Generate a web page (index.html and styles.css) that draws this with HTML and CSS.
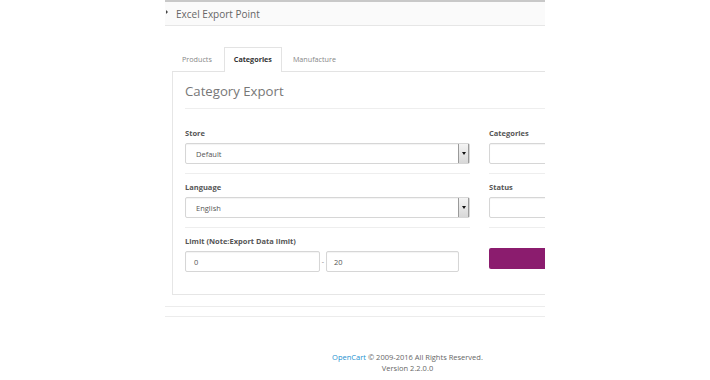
FILE: index.html
```html
<!DOCTYPE html>
<html>
<head>
<meta charset="utf-8">
<link rel="stylesheet" href="styles.css">
</head>
<body>
<div class="page">
  <div class="clip">
    <div class="topline"></div>
    <div class="header">
      <span class="caret"></span>
      <span class="title">Excel Export Point</span>
    </div>
    <div class="tabs">
      <div class="tab">Products</div>
      <div class="tab active">Categories</div>
      <div class="tab">Manufacture</div>
    </div>
    <div class="panel">
      <h1 class="heading">Category Export</h1>
      <div class="grid">
        <div class="group">
          <div class="label">Store</div>
          <div class="select"><span>Default</span><span class="arrow"><i></i></span></div>
        </div>
        <div class="group">
          <div class="label">Categories</div>
          <div class="input"></div>
        </div>
        <div class="group">
          <div class="label">Language</div>
          <div class="select"><span>English</span><span class="arrow"><i></i></span></div>
        </div>
        <div class="group">
          <div class="label">Status</div>
          <div class="input"></div>
        </div>
        <div class="group last">
          <div class="label">Limit (Note:Export Data limit)</div>
          <div class="range">
            <div class="input small">0</div>
            <span class="dash">-</span>
            <div class="input small">20</div>
          </div>
        </div>
        <div class="group last">
          <div class="btn"></div>
        </div>
      </div>
    </div>
    <div class="sep one"></div>
    <div class="sep two"></div>
  </div>
  <div class="footer">
    <div><a class="link">OpenCart</a> © 2009-2016 All Rights Reserved.</div>
    <div>Version 2.2.0.0</div>
  </div>
</div>
</body>
</html>
```
FILE: styles.css
```css
html, body { margin: 0; padding: 0; background: #fff; }
body { font-family: "Open Sans", "Noto Sans", sans-serif; color: #555; }
.page { margin-left: 165px; width: 485px; }
.clip { width: 380px; overflow: hidden; }
.topline { height: 2px; background: #c8c8c8; }
.header {
  height: 23px; background: #fafafa; border-bottom: 1px solid #e6e6e6;
  display: flex; align-items: center;
}
.caret {
  width: 0; height: 0; border-top: 2px solid transparent; border-bottom: 2px solid transparent;
  border-left: 2px solid #444; margin-left: 1px; margin-top: -4px;
}
.title { font-size: 10px; color: #666; margin-left: 8px; }
.tabs {
  margin-top: 21px; margin-left: 7px; width: 420px; height: 24px;
  display: flex; border-bottom: 1px solid #e3e3e3;
}
.tab {
  font-size: 7.2px; color: #888; padding: 0 10px 0 9px; line-height: 23px; height: 24px;
  border: 1px solid transparent; border-bottom: none; box-sizing: border-box;
}
.tab.active {
  color: #333; font-weight: 700; border-color: #e3e3e3; background: #fff;
  height: 25px; padding: 0 9px; margin-left: 1px;
}
.tab.active + .tab { padding-left: 10px; }
.panel {
  margin-left: 7px; width: 420px; height: 223px; box-sizing: border-box;
  border-left: 1px solid #e6e6e6; border-bottom: 1px solid #e6e6e6;
  padding: 0 0 0 12px;
}
.heading {
  margin: 0; font-weight: 400; font-size: 13.2px; color: #777;
  height: 36px; line-height: 39px; border-bottom: 1px solid #eeeeee;
}
.grid {
  margin-top: 19px; display: grid; grid-template-columns: 285px 120px; column-gap: 19px;
}
.group { height: 46px; margin-bottom: 8px; border-bottom: 1px solid #eeeeee; box-sizing: border-box; }
.group.last { border-bottom: none; margin-bottom: 0; }
.label { font-size: 7.5px; font-weight: 700; color: #555; height: 10px; line-height: 10px; margin-bottom: 5px; }
.select, .input {
  height: 21px; box-sizing: border-box; border: 1px solid #d6d6d6; border-radius: 2px;
  font-size: 7.5px; color: #555; display: flex; align-items: center; padding-left: 10px;
  box-shadow: inset 0 1px 1px rgba(0,0,0,0.05);
}
.select { justify-content: space-between; padding-right: 0; }
.arrow {
  width: 11px; height: 19px; border-left: 1px solid #9a9a9a; border-right: 1px solid #9a9a9a;
  background: linear-gradient(#f4f4f4, #d8d8d8); display: flex; align-items: center; justify-content: center;
  box-sizing: border-box;
}
.arrow i {
  width: 0; height: 0; border-left: 2px solid transparent; border-right: 2px solid transparent;
  border-top: 3px solid #111;
}
.range { display: flex; align-items: center; }
.input.small { width: 135px; padding-left: 8px; }
.range .input.small:last-child { width: 133px; padding-left: 7px; }
.dash { width: 6px; font-size: 7px; color: #888; text-align: center; }
.btn { margin-top: 12px; height: 21px; background: #8b1c6e; border-radius: 2px; }
.sep { height: 1px; background: #ececec; }
.sep.one { margin-top: 11px; }
.sep.two { margin-top: 9px; }
.footer { margin-top: 35px; text-align: center; font-size: 7.5px; line-height: 11px; color: #666; }
.link { color: #1e91cf; text-decoration: none; }
```
